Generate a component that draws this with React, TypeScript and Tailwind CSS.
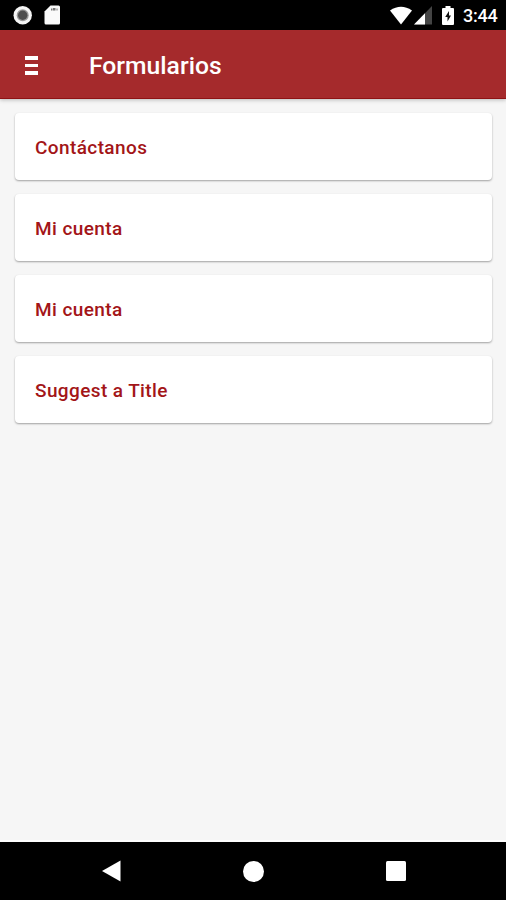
const forms = [
  { id: 1, title: 'Contáctanos' },
  { id: 2, title: 'Mi cuenta' },
  { id: 3, title: 'Mi cuenta' },
  { id: 4, title: 'Suggest a Title' },
]

function StatusBar() {
  return (
    <div className="flex h-[30px] shrink-0 items-center bg-black pr-[9px] pl-[13px] text-white">
      <svg className="h-5 w-5" viewBox="0 0 20 20">
        <circle cx="9.7" cy="10.2" r="9.2" fill="#f5f5f5" />
        <circle cx="9.7" cy="10.2" r="6" fill="#999" />
        <circle cx="9.7" cy="10.2" r="4.7" fill="#4d4d4d" />
      </svg>
      <svg className="ml-[11px] h-5 w-4" viewBox="0 0 16 20">
        <path d="M6.5 0.5h8q1.5 0 1.5 1.5v16q0 1.5-1.5 1.5H2q-1.5 0-1.5-1.5V6.5z" fill="#fafafa" />
        <path d="M7 3.5h1.5v2H7zM9 3h2.5v2.5H9zM12.5 3.5h1v2h-1z" fill="#777" />
      </svg>

      <div className="ml-auto flex items-center">
        {/* Wifi */}
        <svg className="h-[19px] w-[22px]" viewBox="0 0 22 19">
          <path d="M0 4.5Q11-3 22 4.5L11 18.5z" fill="#fff" />
        </svg>
        {/* Signal */}
        <svg className="ml-[2px] h-[19px] w-[18px]" viewBox="0 0 18 19">
          <path d="M18 0v18.5H0z" fill="#444" />
          <path d="M11 7.2v11.300H0z" fill="#fff" />
        </svg>
        {/* Battery */}
        <svg className="ml-[10px] h-[19px] w-3" viewBox="0 0 12 19">
          <path d="M3.5 0h5v2H11q1 0 1 1v15q0 1-1 1H1q-1 0-1-1V3q0-1 1-1h2.5z" fill="#fff" />
          <path d="M7 5L3.200 11h2.300v4.500L9 9.500H7z" fill="#111" />
        </svg>
        <span className="ml-[9px] w-[34px] pt-0.5 text-[18px] leading-none font-medium tracking-[-0.2px]">3:44</span>
      </div>
    </div>
  )
}

function Toolbar() {
  return (
    <header className="z-10 flex h-[69px] shrink-0 items-center border-b border-[#8e1315] bg-[#a52a2c] pl-[25px] text-white shadow-[0_1px_4px_rgba(0,0,0,0.25)]">
      <button className="flex w-[13px] flex-col gap-1 pt-[3px]" aria-label="Menu">
        <span className="h-[3.5px] w-full bg-white" />
        <span className="h-[3.5px] w-full bg-white" />
        <span className="h-[3.5px] w-full bg-white" />
      </button>
      <h1 className="ml-[51px] pt-1 text-[24.7px] leading-none font-medium">Formularios</h1>
    </header>
  )
}

function NavigationBar() {
  return (
    <nav className="flex h-[58px] shrink-0 items-center justify-between bg-black pr-[100px] pl-[102px]">
      <svg className="h-[22px] w-[19px]" viewBox="0 0 19 22">
        <path d="M0 11L18.5 .5v21z" fill="#fff" />
      </svg>
      <span className="h-[21px] w-[21px] rounded-full bg-white" />
      <span className="h-[20px] w-[20px] rounded-[1.5px] bg-white" />
    </nav>
  )
}

export default function App() {
  return (
    <div className="flex h-screen flex-col bg-[#f6f6f6] font-['Roboto',sans-serif]">
      <StatusBar />
      <Toolbar />
      <main className="flex flex-1 flex-col gap-[14px] border-b-2 border-white pt-[14px] pr-[14px] pl-[15px]">
        {forms.map((form) => (
          <div
            key={form.id}
            className="flex h-[67px] items-center rounded-[4px] bg-white pt-[3px] pl-5 shadow-[0_1px_2px_rgba(0,0,0,0.35)]"
          >
            <span className="text-[19px] font-medium tracking-[0.4px] text-[#a31518]">{form.title}</span>
          </div>
        ))}
      </main>
      <NavigationBar />
    </div>
  )
}
